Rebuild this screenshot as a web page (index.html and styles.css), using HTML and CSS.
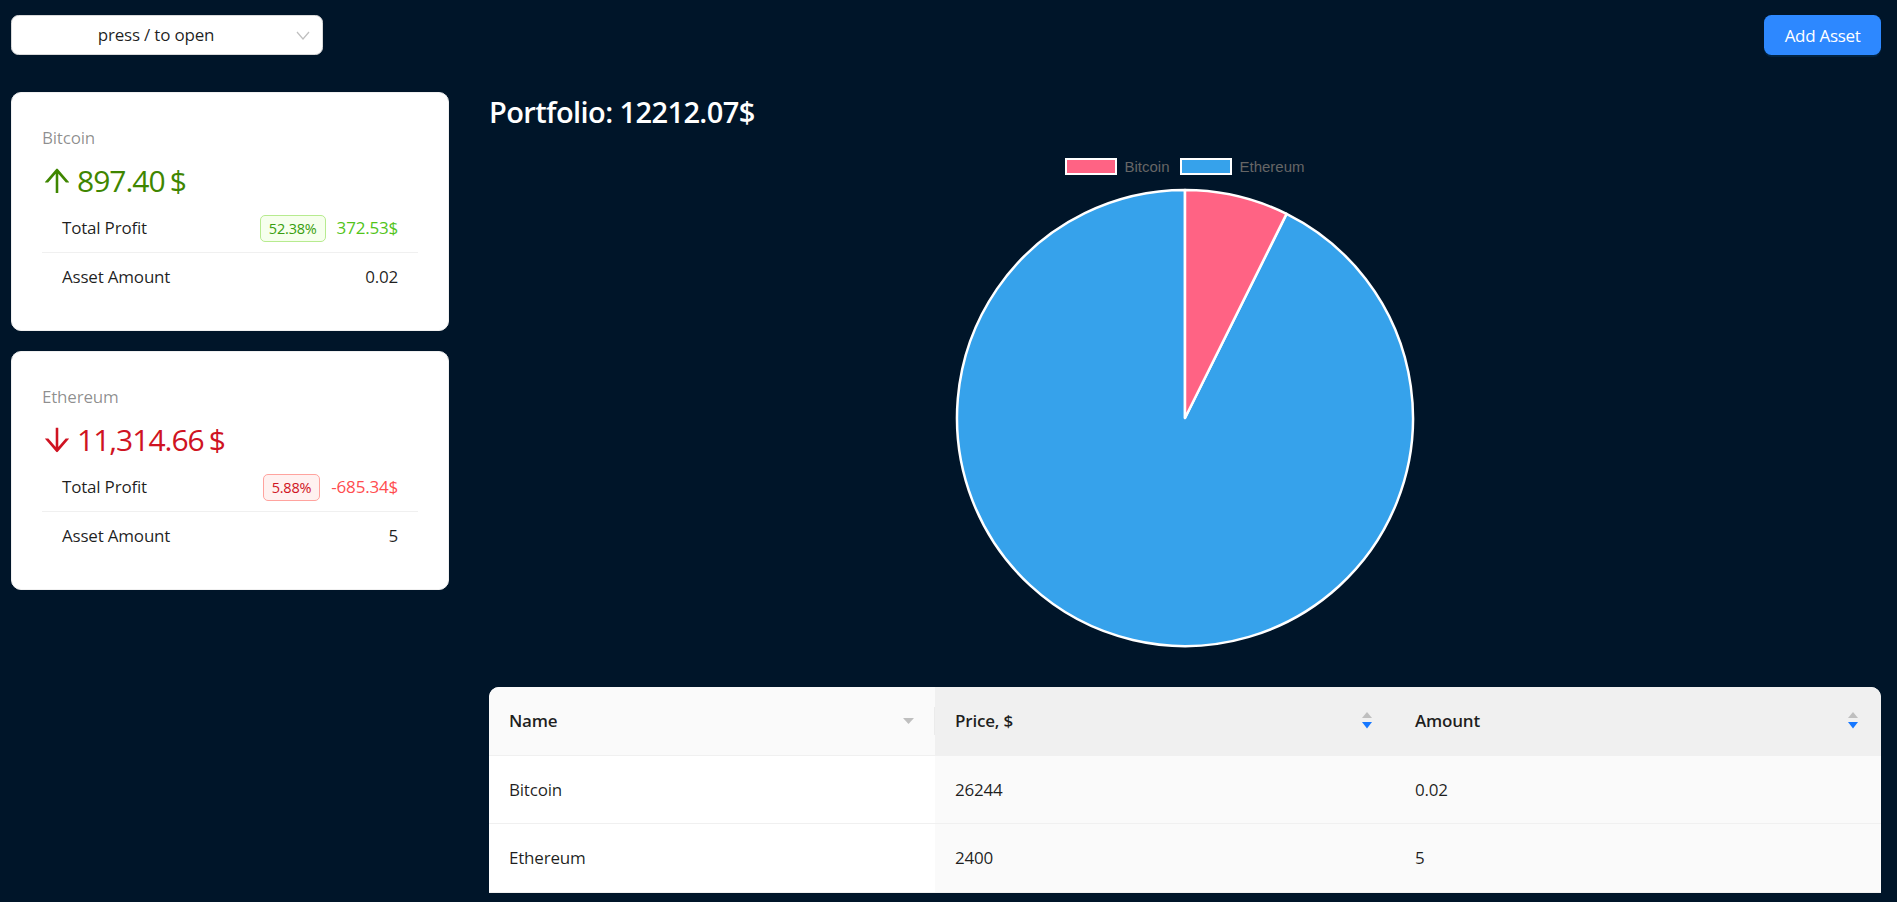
FILE: index.html
```html
<!DOCTYPE html>
<html lang="en">
<head>
<meta charset="utf-8">
<title>Crypto Portfolio</title>
<link rel="stylesheet" href="styles.css">
</head>
<body>
<div class="app">
  <header class="topbar">
    <div class="select">
      <span class="select-value">press / to open</span>
      <svg class="select-arrow" viewBox="0 0 14 9" width="14" height="9"><polyline points="1,1 7,8 13,1" fill="none" stroke="#bfbfbf" stroke-width="1.2"/></svg>
    </div>
    <button class="btn-primary">Add Asset</button>
  </header>

  <main class="main">
    <aside class="sider">
      <div class="card">
        <div class="stat-title">Bitcoin</div>
        <div class="stat-value up">
          <svg class="stat-icon" viewBox="67 72 890 890"><path fill="currentColor" d="M868 545.5L536.1 163a31.96 31.96 0 00-48.3 0L156 545.5a7.970 7.970 0 006 13.2h81c4.6 0 9-2 12.1-5.5L474 300.9V864c0 4.4 3.6 8 8 8h60c4.4 0 8-3.600 8-8V300.9l218.9 252.3c3 3.5 7.4 5.5 12.1 5.5h81c6.8 0 10.5-8 6-13.2z"/></svg>
          <span class="stat-num">897.40</span><span class="stat-suffix">$</span>
        </div>
        <ul class="list">
          <li class="list-item">
            <span>Total Profit</span>
            <span class="item-right"><span class="tag tag-green">52.38%</span><span class="txt-success">372.53$</span></span>
          </li>
          <li class="list-item">
            <span>Asset Amount</span>
            <span>0.02</span>
          </li>
        </ul>
      </div>

      <div class="card">
        <div class="stat-title">Ethereum</div>
        <div class="stat-value down">
          <svg class="stat-icon" viewBox="67 67 890 890"><path fill="currentColor" d="M862 465.3h-81c-4.6 0-9 2-12.1 5.5L550 723.1V160c0-4.4-3.6-8-8-8h-60c-4.4 0-8 3.6-8 8v563.1L255.1 470.8c-3-3.5-7.4-5.5-12.1-5.5h-81c-6.8 0-10.5 8.1-6 13.2L487.9 861a31.96 31.96 0 0048.3 0L868 478.5c4.4-5.2.8-13.2-6-13.2z"/></svg>
          <span class="stat-num">11,314.66</span><span class="stat-suffix">$</span>
        </div>
        <ul class="list">
          <li class="list-item">
            <span>Total Profit</span>
            <span class="item-right"><span class="tag tag-red">5.88%</span><span class="txt-danger">-685.34$</span></span>
          </li>
          <li class="list-item">
            <span>Asset Amount</span>
            <span>5</span>
          </li>
        </ul>
      </div>
    </aside>

    <section class="content">
      <h3 class="portfolio-title">Portfolio: 12212.07$</h3>

      <div class="chart">
        <div class="legend">
          <div class="legend-item"><span class="legend-box box-btc"></span><span class="legend-label">Bitcoin</span></div>
          <div class="legend-item"><span class="legend-box box-eth"></span><span class="legend-label">Ethereum</span></div>
        </div>
        <svg class="pie" viewBox="0 0 460 460" width="460" height="460">
          <path d="M230,230 L331.55,25.87 A228,228 0 1,1 230,2 Z" fill="#36A2EB" stroke="#ffffff" stroke-width="2.5" stroke-linejoin="round"/>
          <path d="M230,230 L230,2 A228,228 0 0,1 331.55,25.87 Z" fill="#FF6384" stroke="#ffffff" stroke-width="2.5" stroke-linejoin="round"/>
        </svg>
      </div>

      <table class="table">
        <colgroup>
          <col class="col-name">
          <col class="col-price">
          <col class="col-amount">
        </colgroup>
        <thead>
          <tr>
            <th class="th th-name">
              <div class="th-inner"><span>Name</span>
                <svg class="filter-icon" viewBox="0 0 11 6" width="11" height="6"><polygon points="0,0 11,0 5.5,6" fill="#bfbfbf"/></svg>
              </div>
            </th>
            <th class="th th-sorted">
              <div class="th-inner"><span>Price, $</span>
                <svg class="sorter" viewBox="0 0 12 17" width="12" height="17"><polygon points="1,6 6,0 11,6" fill="#bfbfbf"/><polygon points="1,10 11,10 6,16.5" fill="#1677ff"/></svg>
              </div>
            </th>
            <th class="th th-sorted th-last">
              <div class="th-inner"><span>Amount</span>
                <svg class="sorter" viewBox="0 0 12 17" width="12" height="17"><polygon points="1,6 6,0 11,6" fill="#bfbfbf"/><polygon points="1,10 11,10 6,16.5" fill="#1677ff"/></svg>
              </div>
            </th>
          </tr>
        </thead>
        <tbody>
          <tr>
            <td class="td">Bitcoin</td>
            <td class="td td-sorted">26244</td>
            <td class="td td-sorted">0.02</td>
          </tr>
          <tr>
            <td class="td">Ethereum</td>
            <td class="td td-sorted">2400</td>
            <td class="td td-sorted">5</td>
          </tr>
        </tbody>
      </table>
    </section>
  </main>
</div>
</body>
</html>
```

FILE: styles.css
```css
* { box-sizing: border-box; }

html, body {
  margin: 0;
  padding: 0;
  height: 100%;
  overflow: hidden;
}

body {
  background: #001529;
  font-family: "Open Sans", "Noto Sans", sans-serif;
  font-size: 17.5px;
  line-height: 27.5px;
  color: rgba(0, 0, 0, 0.88);
}

.app {
  width: 100%;
}

/* ---------- top bar ---------- */
.topbar {
  display: flex;
  justify-content: space-between;
  align-items: center;
  padding: 15px 16px 0 11px;
}

.select {
  width: 312px;
  height: 40px;
  background: #ffffff;
  border: 1px solid #d9d9d9;
  border-radius: 7.5px;
  display: flex;
  align-items: center;
  padding: 0 12px 0 12px;
}

.select-value {
  flex: 1;
  text-align: center;
  padding-right: 8px;
  font-size: 17px;
  color: rgba(0, 0, 0, 0.88);
  letter-spacing: -0.2px;
}

.select-arrow {
  display: block;
  flex: none;
}

.btn-primary {
  height: 40px;
  padding: 0 20.5px;
  border: none;
  border-radius: 7.5px;
  background: #2d88ff;
  color: #ffffff;
  font-family: "Open Sans", "Noto Sans", sans-serif;
  font-size: 17px;
  letter-spacing: -0.3px;
  box-shadow: 0 2px 0 rgba(5, 145, 255, 0.12);
  cursor: pointer;
}

/* ---------- layout ---------- */
.main {
  display: flex;
  align-items: flex-start;
  gap: 40px;
  padding: 37px 16px 0 11px;
}

.sider {
  width: 438px;
  flex: none;
  display: flex;
  flex-direction: column;
  gap: 20px;
}

.content {
  flex: 1;
  min-width: 0;
}

/* ---------- cards ---------- */
.card {
  background: #ffffff;
  border: 1px solid #f0f0f0;
  border-radius: 10px;
  padding: 30px 30px 29px 30px;
}

.stat-title {
  color: rgba(0, 0, 0, 0.45);
  font-size: 17px;
  line-height: 28px;
  margin-bottom: 5px;
  padding-top: 1px;
  letter-spacing: -0.2px;
}

.stat-value {
  display: flex;
  align-items: center;
  height: 47px;
  font-size: 30px;
  line-height: 47px;
  letter-spacing: -1px;
}

.stat-value.up { color: #3f8600; }
.stat-value.down { color: #cf1322; }

.stat-icon {
  width: 30px;
  height: 30px;
  flex: none;
  margin-right: 5px;
  display: block;
}

.stat-suffix {
  margin-left: 5px;
}

.list {
  list-style: none;
  margin: 0;
  padding: 0;
}

.list-item {
  display: flex;
  justify-content: space-between;
  align-items: center;
  padding: 10px 20px;
  line-height: 28px;
  font-size: 17px;
  letter-spacing: -0.2px;
}

.list-item + .list-item {
  border-top: 1px solid rgba(5, 5, 5, 0.06);
}

.item-right {
  display: flex;
  align-items: center;
}

.tag {
  display: inline-block;
  height: 27px;
  line-height: 25px;
  padding: 0 8px;
  font-size: 14.5px;
  border: 1px solid;
  border-radius: 5px;
  margin-right: 11px;
  letter-spacing: -0.2px;
}

.tag-green {
  color: #389e0d;
  background: #f6ffed;
  border-color: #b7eb8f;
}

.tag-red {
  color: #cf1322;
  background: #fff1f0;
  border-color: #ffa39e;
}

.txt-success { color: #52c41a; }
.txt-danger { color: #ff4d4f; }

/* ---------- portfolio ---------- */
.portfolio-title {
  margin: 0 0 15px 0;
  color: #ffffff;
  font-size: 29px;
  font-weight: 600;
  line-height: 40.5px;
  letter-spacing: -0.6px;
}

.chart {
  height: 500px;
  display: flex;
  flex-direction: column;
  align-items: center;
}

.legend {
  display: flex;
  gap: 11px;
  padding-top: 10px;
  margin-bottom: 13px;
  font-family: "Liberation Sans", Arial, sans-serif;
  font-size: 15px;
  line-height: 17px;
  color: #666666;
}

.legend-item {
  display: flex;
  align-items: flex-start;
}

.legend-box {
  width: 52px;
  height: 17px;
  border: 2.5px solid #ffffff;
  margin-right: 7px;
}

.box-btc { background: #FF6384; }
.box-eth { background: #36A2EB; }

.legend-label {
  line-height: 17px;
}

.pie {
  display: block;
  flex: none;
}

/* ---------- table ---------- */
.table {
  width: 100%;
  margin-top: 39.5px;
  border-collapse: separate;
  border-spacing: 0;
  table-layout: fixed;
  background: #ffffff;
  border-radius: 10px 10px 0 0;
  font-size: 17px;
  letter-spacing: -0.2px;
}

.col-name { width: 446px; }
.col-price { width: 460px; }

.th {
  position: relative;
  text-align: left;
  font-weight: 600;
  padding: 20px;
  line-height: 27.5px;
  background: #fafafa;
  border-bottom: 1px solid #f0f0f0;
  color: rgba(0, 0, 0, 0.88);
}

.th-name {
  border-top-left-radius: 10px;
}

.th-name::before {
  content: "";
  position: absolute;
  right: 0;
  top: 50%;
  width: 1px;
  height: 28px;
  transform: translateY(-50%);
  background: rgba(0, 0, 0, 0.06);
}

.th-sorted {
  background: #f0f0f0;
}

.th-last {
  border-top-right-radius: 10px;
}

.th-inner {
  display: flex;
  justify-content: space-between;
  align-items: center;
}

.filter-icon {
  display: block;
  margin-right: 1px;
}

.sorter {
  display: block;
  margin-right: 2px;
}

.td {
  padding: 20px;
  line-height: 27.5px;
  border-bottom: 1px solid #f0f0f0;
  background: #ffffff;
}

.td-sorted {
  background: #fafafa;
}
```
